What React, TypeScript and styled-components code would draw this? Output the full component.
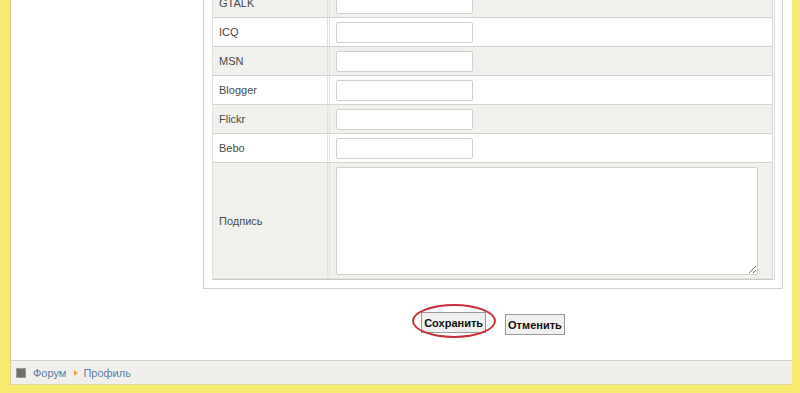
import styled, { createGlobalStyle } from 'styled-components'

const GlobalStyle = createGlobalStyle`
    html, body {
        margin: 0;
        padding: 0;
        background: #f6eb70;
        font-family: "Liberation Sans", Arial, sans-serif;
    }
`;

const Frame = styled.div`
    width: 800px;
    height: 393px;
    box-sizing: border-box;
    padding: 0 8px 8px 10px;
    display: flex;
    flex-direction: column;
    overflow: hidden;
`;

const Sheet = styled.div`
    flex: 1;
    display: flex;
    flex-direction: column;
    background: #fff;
    border-left: 1px solid #d9cf8c;
    border-bottom: 1px solid #ddd6a0;
    min-height: 0;
`;

const Main = styled.div`
    flex: 1;
    min-height: 0;
    overflow: hidden;
    display: grid;
    grid-template-columns: 192px 580px;
`;

const Side = styled.div``;

const Content = styled.div`
    display: flex;
    flex-direction: column;
    justify-content: flex-end;
    overflow: hidden;
    & > * {
        flex-shrink: 0;
    }
`;

const Panel = styled.div`
    border: 1px solid #cfcfcf;
    border-top: none;
    padding: 0 7px 8px 8px;
    background: #fff;
`;

const Table = styled.div`
    border-left: 1px solid #e2e2de;
    border-right: 3px double #d6d6d2;
    border-bottom: 1px solid #c8c8c4;
`;

const Row = styled.div<{ $alt?: boolean; $tall?: boolean }>`
    display: grid;
    grid-template-columns: 117px 1fr;
    height: ${p => (p.$tall ? 115 : 28)}px;
    border-bottom: 1px solid ${p => (p.$tall ? '#e0e0dc' : '#d2d2ce')};
    background: ${p => (p.$alt ? '#f0f0ec' : '#fff')};
`;

const Label = styled.div`
    display: flex;
    align-items: center;
    padding-left: 6px;
    font-size: 11px;
    color: #4a4a4a;
    border-right: 3px double #e2e2de;
`;

const Field = styled.div`
    display: flex;
    align-items: center;
    padding: 0 17px 0 6px;
`;

const Input = styled.input`
    box-sizing: border-box;
    width: 137px;
    height: 21px;
    border: 1px solid #d0d0cc;
    border-radius: 2px;
    background: #fff;
    outline: none;
`;

const TextArea = styled.textarea`
    box-sizing: border-box;
    width: 422px;
    height: 108px;
    border: 1px solid #d0d0cc;
    border-radius: 2px;
    background: #fff;
    resize: both;
    outline: none;
`;

const ButtonBar = styled.div`
    height: 71px;
    box-sizing: border-box;
    padding-top: 23px;
    display: flex;
    justify-content: center;
    align-items: flex-start;
    gap: 19px;
`;

const Circled = styled.span`
    position: relative;
    display: inline-flex;

    &::after {
        content: '';
        position: absolute;
        left: -9px;
        right: -10px;
        top: -8px;
        bottom: -5px;
        border: 2px solid #c8303c;
        border-radius: 50%;
        pointer-events: none;
    }
`;

const Button = styled.button<{ $drop?: number }>`
    height: 21px;
    margin-top: ${p => p.$drop ?? 0}px;
    padding: 0 2px;
    font-family: "Liberation Sans", Arial, sans-serif;
    font-size: 11px;
    font-weight: bold;
    color: #111;
    background: #f0f0ee;
    border: 1px solid #9a9a9a;
    border-radius: 0;
`;

const Footer = styled.div`
    height: 23px;
    border-top: 1px solid #cfcfcb;
    background: #f0efeb;
    display: flex;
    align-items: center;
    padding-left: 5px;
    font-size: 11px;
`;

const HomeIcon = styled.span`
    width: 8px;
    height: 8px;
    background: #6e6e6a;
    border: 1px solid #9a9a96;
    margin-right: 7px;
`;

const Crumb = styled.a`
    color: #5c7ea3;
    text-decoration: none;
`;

const Arrow = styled.span`
    width: 0;
    height: 0;
    border-top: 3px solid transparent;
    border-bottom: 3px solid transparent;
    border-left: 4px solid #f0a040;
    margin: 0 5px 0 8px;
`;

const fields: string[] = ['AIM', 'YIM', 'Skype', 'GTALK', 'ICQ', 'MSN', 'Blogger', 'Flickr', 'Bebo']

export default function App() {
    return (
        <>
            <GlobalStyle />
            <Frame>
                <Sheet>
                    <Main>
                        <Side />
                        <Content>
                            <Panel>
                                <Table>
                                    {
                                        fields.map((name, i) => (
                                            <Row key={name} $alt={(fields.length - i) % 2 === 0}>
                                                <Label>{name}</Label>
                                                <Field>
                                                    <Input type='text' />
                                                </Field>
                                            </Row>
                                        ))
                                    }
                                    <Row $alt $tall>
                                        <Label>Подпись</Label>
                                        <Field>
                                            <TextArea />
                                        </Field>
                                    </Row>
                                </Table>
                            </Panel>
                            <ButtonBar>
                                <Circled>
                                    <Button>Сохранить</Button>
                                </Circled>
                                <Button $drop={2}>Отменить</Button>
                            </ButtonBar>
                        </Content>
                    </Main>
                    <Footer>
                        <HomeIcon />
                        <Crumb href='#'>Форум</Crumb>
                        <Arrow />
                        <Crumb href='#'>Профиль</Crumb>
                    </Footer>
                </Sheet>
            </Frame>
        </>
    )
}
